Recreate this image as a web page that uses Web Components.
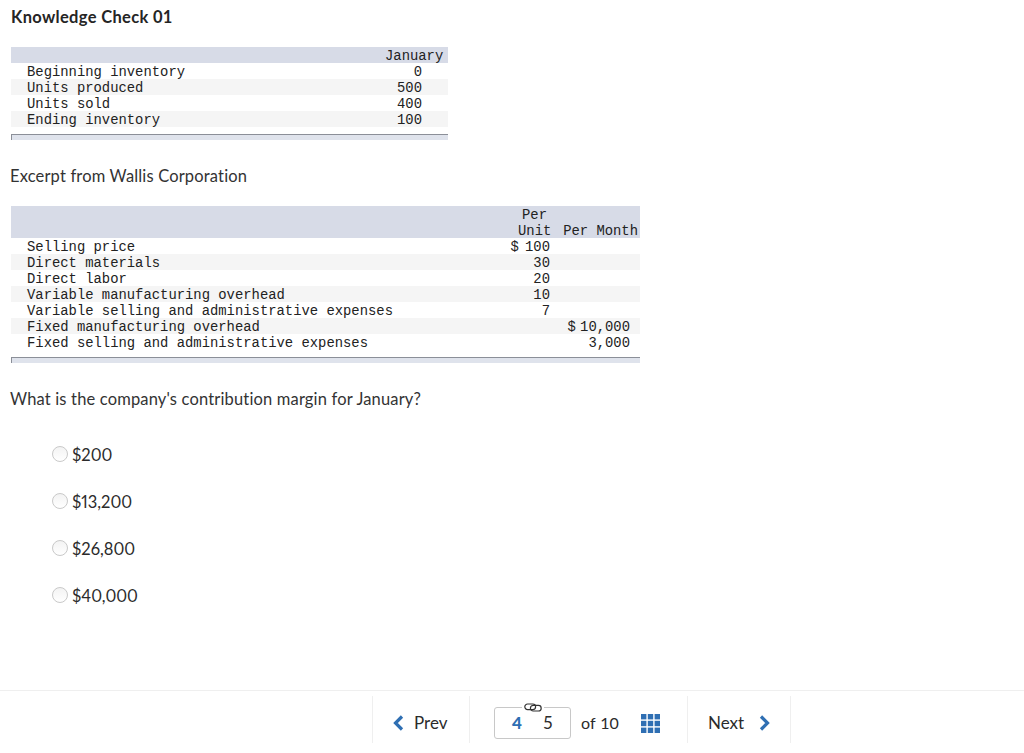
<!DOCTYPE html>
<html>
<head>
<meta charset="utf-8">
<title>Knowledge Check 01</title>
<style>
  html, body { margin: 0; padding: 0; background: #fff; }
  body { font-family: Lato, "Open Sans", sans-serif; color: #252525; height: 753px; overflow: hidden; }
</style>
</head>
<body>
<check-page>
  <h-title slot="title">Knowledge Check 01</h-title>

  <fin-table style="--cols: 1fr 63px; width: 437px; margin-top: 19px;">
    <fin-row head><span></span><span class="r">January</span></fin-row>
    <fin-row><span>Beginning inventory</span><span class="n">0</span></fin-row>
    <fin-row alt><span>Units produced</span><span class="n">500</span></fin-row>
    <fin-row><span>Units sold</span><span class="n">400</span></fin-row>
    <fin-row alt><span>Ending inventory</span><span class="n">100</span></fin-row>
  </fin-table>

  <body-text style="margin-top: 25px;">Excerpt from Wallis Corporation</body-text>

  <fin-table style="--cols: 1fr 44px 89px; width: 629px; margin-top: 19px;">
    <fin-row head><span></span><span class="c">Per<br>Unit</span><span class="r wide">Per Month</span></fin-row>
    <fin-row><span>Selling price</span><span class="u tight2">$ 100</span><span></span></fin-row>
    <fin-row alt><span>Direct materials</span><span class="u">30</span><span></span></fin-row>
    <fin-row><span>Direct labor</span><span class="u">20</span><span></span></fin-row>
    <fin-row alt><span>Variable manufacturing overhead</span><span class="u">10</span><span></span></fin-row>
    <fin-row><span>Variable selling and administrative expenses</span><span class="u">7</span><span></span></fin-row>
    <fin-row alt><span>Fixed manufacturing overhead</span><span></span><span class="m tight">$ 10,000</span></fin-row>
    <fin-row><span>Fixed selling and administrative expenses</span><span></span><span class="m">3,000</span></fin-row>
  </fin-table>

  <body-text style="margin-top: 25px;">What is the company's contribution margin for January?</body-text>

  <radio-list>
    <radio-option>$200</radio-option>
    <radio-option>$13,200</radio-option>
    <radio-option>$26,800</radio-option>
    <radio-option>$40,000</radio-option>
  </radio-list>

  <quiz-footer slot="footer"></quiz-footer>
</check-page>

<script>
customElements.define(
  "check-page",
  class CheckPage extends HTMLElement {
    constructor() {
      super();
      this.attachShadow({mode: "open"});
      this.shadowRoot.innerHTML = `
        <style>
          :host { display: flex; flex-direction: column; height: 753px; }
          .main { flex: 1; padding: 6px 0 0 11px; display: flex; flex-direction: column; align-items: flex-start; }
        </style>
        <div class="main"><slot name="title"></slot><slot></slot></div>
        <slot name="footer"></slot>
      `;
    }
  }
);

customElements.define(
  "h-title",
  class HTitle extends HTMLElement {
    constructor() {
      super();
      this.attachShadow({mode: "open"});
      this.shadowRoot.innerHTML = `
        <style>
          :host { display: block; font: 700 16.5px/22px Lato, "Open Sans", sans-serif; letter-spacing: 0.33px; color: #252525; }
        </style>
        <slot></slot>
      `;
    }
  }
);

customElements.define(
  "body-text",
  class BodyText extends HTMLElement {
    constructor() {
      super();
      this.attachShadow({mode: "open"});
      this.shadowRoot.innerHTML = `
        <style>
          :host { display: block; font: 400 16.5px/22px Lato, "Open Sans", sans-serif; letter-spacing: 0.16px; color: #333; margin-left: -1px; }
        </style>
        <slot></slot>
      `;
    }
  }
);

customElements.define(
  "fin-table",
  class FinTable extends HTMLElement {
    constructor() {
      super();
      this.attachShadow({mode: "open"});
      this.shadowRoot.innerHTML = `
        <style>
          :host { display: block; font: 13.87px/16px "Liberation Mono", monospace; color: #222; }
          .end { height: 5px; margin-top: 7px; background: #dfe3ec; border-top: 1px solid #8b8f98; border-left: 1px solid #8b8f98; }
        </style>
        <slot></slot>
        <div class="end"></div>
      `;
    }
  }
);

customElements.define(
  "fin-row",
  class FinRow extends HTMLElement {
    constructor() {
      super();
      this.attachShadow({mode: "open"});
      this.shadowRoot.innerHTML = `
        <style>
          :host { display: grid; grid-template-columns: var(--cols); align-items: end; }
          :host([head]) { background: #d7dbe7; }
          :host([alt]) { background: #f5f5f5; }
          ::slotted(span) { padding-top: 1px; margin-bottom: -1px; }
          ::slotted(span:first-child) { padding-left: 16px; white-space: nowrap; }
          ::slotted(.r) { text-align: right; padding-right: 7px; white-space: nowrap; }
          ::slotted(.wide) { padding-right: 2px; }
          ::slotted(.n) { text-align: right; padding-right: 26px; }
          ::slotted(.c) { text-align: center; padding-left: 11px; }
          ::slotted(.u) { text-align: right; padding-right: 1px; white-space: nowrap; }
          ::slotted(.m) { text-align: right; padding-right: 10px; white-space: nowrap; }
          ::slotted(.tight) { word-spacing: -4px; }
          ::slotted(.tight2) { word-spacing: -2px; }
        </style>
        <slot></slot>
      `;
    }
  }
);

customElements.define(
  "radio-list",
  class RadioList extends HTMLElement {
    constructor() {
      super();
      this.attachShadow({mode: "open"});
      this.shadowRoot.innerHTML = `
        <style>
          :host { display: flex; flex-direction: column; gap: 23px; margin: 33px 0 0 41px; }
        </style>
        <slot></slot>
      `;
    }
  }
);

customElements.define(
  "radio-option",
  class RadioOption extends HTMLElement {
    constructor() {
      super();
      this.attachShadow({mode: "open"});
      this.shadowRoot.innerHTML = `
        <style>
          :host { display: flex; align-items: center; gap: 4px; height: 24px; font: 400 16.5px/24px Lato, "Open Sans", sans-serif; font-variant-numeric: proportional-nums; color: #2b2b2b; }
          .dot {
            width: 14px; height: 14px; margin-top: -2px; border-radius: 50%;
            border: 1px solid #c9c9c9; background: linear-gradient(#f3f3f3, #fff);
          }
        </style>
        <span class="dot"></span><span><slot></slot></span>
      `;
    }
  }
);

customElements.define(
  "quiz-footer",
  class QuizFooter extends HTMLElement {
    constructor() {
      super();
      this.attachShadow({mode: "open"});
      this.shadowRoot.innerHTML = `
        <style>
          :host { display: flex; height: 63px; padding: 5px 0 0 372px; box-sizing: border-box; border-top: 1px solid #efefef; font: 400 17px/22px Lato, "Open Sans", sans-serif; color: #2b2b2b; }
          .cell { height: 47px; padding-top: 7px; display: flex; align-items: center; box-sizing: border-box; border-left: 1px solid #efefef; }
          .prev { width: 97px; padding-left: 20px; gap: 9px; }
          .mid { width: 218px; padding-left: 24px; }
          .next { width: 104px; padding-left: 20px; gap: 14px; border-right: 1px solid #efefef; }
          .pages {
            position: relative; width: 77px; height: 32px; box-sizing: border-box;
            border: 1px solid #c8c8c8; border-radius: 3px; display: flex; align-items: center;
          }
          .pages b { color: #2f6fb3; font-weight: 900; margin-left: 17px; width: 31px; }
          .link { position: absolute; left: 27px; top: -5px; width: 22px; height: 9px; background: #fff; }
          .link svg { margin: 0 auto; }
          .of { margin: 0 0 0 10px; width: 60px; font-size: 16px; word-spacing: 1px; }
          svg { display: block; flex: none; }
        </style>
        <div class="cell prev">
          <svg width="12" height="16" viewBox="0 0 12 16"><path d="M9 1.5 2.5 8 9 14.5" fill="none" stroke="#2f6fb3" stroke-width="3.2"/></svg>
          <span>Prev</span>
        </div>
        <div class="cell mid">
          <div class="pages">
            <span class="link">
              <svg width="18" height="9" viewBox="0 0 18 9" fill="none" stroke="#333" stroke-width="1.2">
                <rect x="0.8" y="1" width="10.8" height="5.6" rx="2.8"/>
                <rect x="6.4" y="2.4" width="10.8" height="5.6" rx="2.8"/>
              </svg>
            </span>
            <b>4</b><span>5</span>
          </div>
          <span class="of">of 10</span>
          <svg width="19" height="19" viewBox="0 0 19 19" fill="#2f6fb3">
            <rect x="0" y="0" width="5.4" height="5.4"/><rect x="6.8" y="0" width="5.4" height="5.4"/><rect x="13.6" y="0" width="5.4" height="5.4"/>
            <rect x="0" y="6.8" width="5.4" height="5.4"/><rect x="6.8" y="6.8" width="5.4" height="5.4"/><rect x="13.6" y="6.8" width="5.4" height="5.4"/>
            <rect x="0" y="13.6" width="5.4" height="5.4"/><rect x="6.8" y="13.6" width="5.4" height="5.4"/><rect x="13.6" y="13.6" width="5.4" height="5.4"/>
          </svg>
        </div>
        <div class="cell next">
          <span>Next</span>
          <svg width="12" height="16" viewBox="0 0 12 16"><path d="M3 1.5 9.5 8 3 14.5" fill="none" stroke="#2f6fb3" stroke-width="3.2"/></svg>
        </div>
      `;
    }
  }
);
</script>
</body>
</html>
